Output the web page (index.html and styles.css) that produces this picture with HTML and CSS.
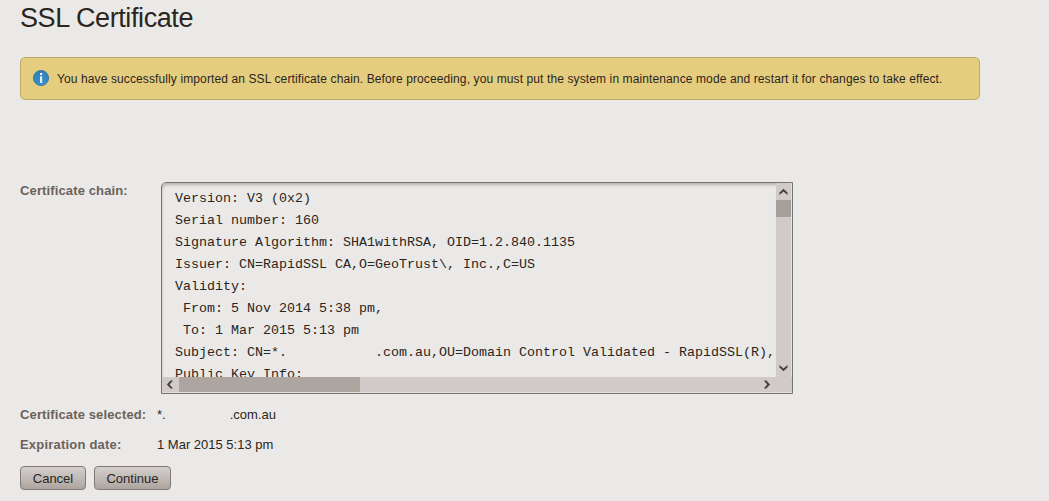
FILE: index.html
```
<!DOCTYPE html>
<html lang="en">
<head>
<meta charset="utf-8">
<title>SSL Certificate</title>
<link rel="stylesheet" href="styles.css">
</head>
<body>
<main class="page">
  <h1 class="title"><span>SSL Certificate</span></h1>
  <div class="notice">
    <svg class="notice-icon" width="16" height="16" viewBox="0 0 16 16">
      <defs><linearGradient id="info" x1="0" y1="0" x2="0" y2="1"><stop offset="0" stop-color="#2f7fb4"/><stop offset="1" stop-color="#3494d0"/></linearGradient></defs>
      <circle cx="8" cy="8" r="7.6" fill="url(#info)" stroke="#28709f" stroke-width=".8"/>
      <rect x="7" y="3" width="2.2" height="2" fill="#f2f6f8"/>
      <path d="M7 6.2h2.2v6.8H7z" fill="#e3edf2"/>
    </svg>
    <span class="notice-text">You have successfully imported an SSL certificate chain. Before proceeding, you must put the system in maintenance mode and restart it for changes to take effect.</span>
  </div>
  <div class="row row-chain">
    <div class="label label-chain"><span>Certificate chain:</span></div>
    <div class="chain">
      <div class="chain-view">
        <div class="line">Version: V3 (0x2)</div>
        <div class="line">Serial number: 160</div>
        <div class="line">Signature Algorithm: SHA1withRSA, OID=1.2.840.1135</div>
        <div class="line">Issuer: CN=RapidSSL CA,O=GeoTrust\, Inc.,C=US</div>
        <div class="line">Validity:</div>
        <div class="line"> From: 5 Nov 2014 5:38 pm,</div>
        <div class="line"> To: 1 Mar 2015 5:13 pm</div>
        <div class="line line-split"><span>Subject: CN=*.</span><span>.com.au,OU=Domain Control Validated - RapidSSL(R),</span></div>
        <div class="line">Public Key Info:</div>
      </div>
      <div class="vbar">
        <svg class="arrow" width="15" height="16" viewBox="0 0 15 16"><path d="M3.5 11V8.5L7.5 4.8l4 3.7V11l-4-3.4z"/></svg>
        <div class="vthumb"></div>
        <svg class="arrow vdown" width="15" height="16" viewBox="0 0 15 16"><path d="M3.5 4v2.5l4 3.8 4-3.8V4l-4 3.4z"/></svg>
      </div>
      <div class="hbar">
        <svg class="arrow" width="17" height="15" viewBox="0 0 17 15"><path d="M11 3.5H8.5L4.8 7.5l3.7 4H11l-3.4-4z"/></svg>
        <div class="hthumb"></div>
        <svg class="arrow hright" width="17" height="15" viewBox="0 0 17 15"><path d="M5.8 3.5h2.5l3.8 4-3.8 4H5.8l3.4-4z"/></svg>
      </div>
    </div>
  </div>
  <div class="row row-value">
    <div class="label label-selected"><span>Certificate selected:</span></div>
    <div class="value"><span>*.</span><span class="value-gap"></span><span>.com.au</span></div>
  </div>
  <div class="row row-value row-date">
    <div class="label label-date"><span>Expiration date:</span></div>
    <div class="value value-date"><span>1 Mar 2015 5:13 pm</span></div>
  </div>
  <div class="actions">
    <button class="button cancel" type="button">Cancel</button>
    <button class="button continue" type="button">Continue</button>
  </div>
</main>
</body>
</html>
```
FILE: styles.css
```
* { box-sizing: border-box; }
body {
  margin: 0;
  background: #eae9e7;
  color: #2b2520;
  font: 13px/16px "Liberation Sans", Arial, sans-serif;
}
.page { width: 1049px; height: 501px; padding: 2px 20px 0; overflow: hidden; }
.title { margin: 0; font-size: 27px; line-height: 32px; font-weight: 400; letter-spacing: -.4px; }
.notice {
  display: flex;
  align-items: center;
  gap: 8px;
  width: 960px;
  height: 43px;
  margin-top: 23px;
  padding: 0 0 0 12px;
  border: 1px solid #bba968;
  border-radius: 5px;
  background: #e5cd7f;
}
.notice-icon { flex: none; margin-top: -2px; }
.notice-text { font-size: 12px; letter-spacing: .112px; white-space: nowrap; }
.row { display: flex; }
.row-chain { margin-top: 82px; }
.label { flex: none; width: 137px; font-weight: 700; color: #6b625d; letter-spacing: .13px; white-space: nowrap; }
.label-chain { width: 141px; padding-top: 1px; }
.label-date { letter-spacing: .2px; }
.chain {
  display: grid;
  grid-template: 194px 16px / 614px 16px;
  width: 632px;
  height: 212px;
  border: 1px solid #777472;
  border-radius: 5px 0 0 0;
}
.chain-view {
  overflow: hidden;
  padding: 5px 0 0 13px;
  border-radius: 4px 0 0 0;
  box-shadow: inset 1px 3px 3px -1px #b8b4b1;
}
.line { height: 22px; white-space: pre; font: 13.333px/22px "Liberation Mono", "Courier New", monospace; }
.line-split { display: flex; gap: 88px; }
.vbar { display: flex; flex-direction: column; padding-top: 1px; background: #d0cbc8; border-right: 1px solid #e6e3e1; }
.vthumb { height: 17px; background: #a5a09b; }
.vdown { margin-top: auto; }
.hbar { grid-column: 1 / 3; display: flex; background: #d0cbc8; border-bottom: 1px solid #e0dddb; }
.hthumb { width: 181px; background: #aca5a0; }
.hright { margin-left: auto; margin-right: 17px; }
.arrow { display: block; flex: none; fill: #48423f; }
.row-value { margin-top: 13px; }
.row-date { margin-top: 14px; }
.value { font-size: 13px; white-space: nowrap; }
.value-gap { display: inline-block; width: 64px; }
.actions { display: flex; gap: 8px; margin-top: 13px; }
.button {
  height: 24px;
  padding: 1px 0 0;
  border: 1px solid #817a76;
  border-radius: 4px;
  background: linear-gradient(#d5d0cd, #aca49f);
  color: #2b2520;
  font: 13px/20px "Liberation Sans", Arial, sans-serif;
}
.cancel { width: 66px; }
.continue { width: 77px; }
```
